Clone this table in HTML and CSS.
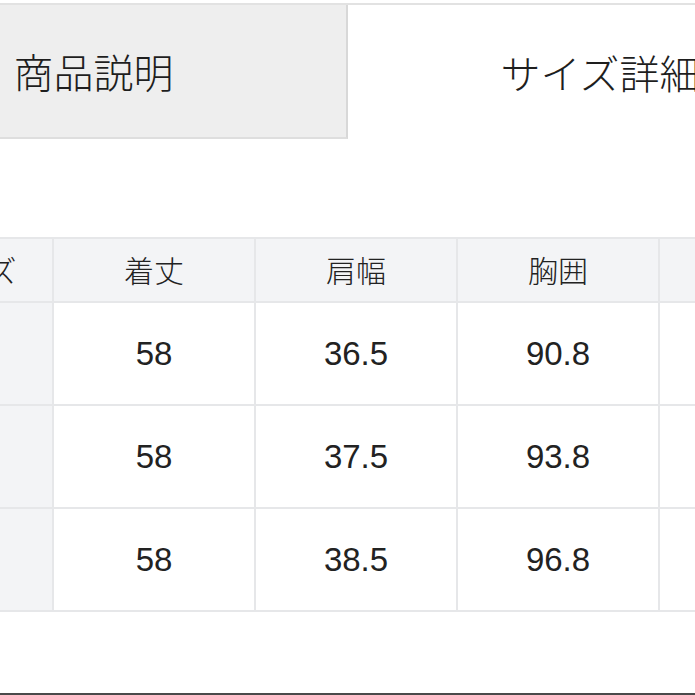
FILE: index.html
```html
<!DOCTYPE html>
<html lang="ja">
<head>
<meta charset="utf-8">
<link rel="stylesheet" href="styles.css">
</head>
<body>
<div class="page">
  <div class="tabs">
    <div class="tab tab-inactive">商品説明</div>
    <div class="tab tab-active">サイズ詳細</div>
  </div>
  <table class="size-table">
    <colgroup>
      <col class="col-first">
      <col class="col-data">
      <col class="col-data">
      <col class="col-data">
      <col class="col-data">
    </colgroup>
    <tr class="head">
      <td class="first">サイズ</td>
      <td>着丈</td>
      <td>肩幅</td>
      <td>胸囲</td>
      <td>袖丈</td>
    </tr>
    <tr>
      <td class="first">S</td>
      <td>58</td>
      <td>36.5</td>
      <td>90.8</td>
      <td>58</td>
    </tr>
    <tr>
      <td class="first">M</td>
      <td>58</td>
      <td>37.5</td>
      <td>93.8</td>
      <td>59</td>
    </tr>
    <tr>
      <td class="first">L</td>
      <td>58</td>
      <td>38.5</td>
      <td>96.8</td>
      <td>60</td>
    </tr>
  </table>
  <div class="footer-line"></div>
</div>
</body>
</html>
```

FILE: styles.css
```css
html, body {
  margin: 0;
  padding: 0;
  background: #ffffff;
  overflow: hidden;
}

body {
  width: 695px;
  height: 695px;
  font-family: "Noto Sans CJK JP", "Liberation Sans", sans-serif;
  color: #222222;
}

.page {
  padding-top: 3px;
  width: 695px;
  overflow: hidden;
}

.tabs {
  display: flex;
  margin-left: -159px;
  width: 1100px;
  border-top: 2px solid #e2e2e2;
}

.tab {
  box-sizing: border-box;
  height: 134px;
  display: flex;
  align-items: center;
  justify-content: center;
  font-size: 40px;
  font-weight: 300;
  color: #1e1e1e;
  line-height: 1;
  flex: none;
}

.tab-inactive {
  width: 507px;
  background: #eeeeee;
  border-right: 2px solid #d8d8d8;
  border-bottom: 2px solid #dedede;
}

.tab-active {
  width: 504px;
  background: #ffffff;
}

.size-table {
  margin-top: 98px;
  margin-left: -108px;
  width: 970px;
  border-collapse: separate;
  border-spacing: 0;
  table-layout: fixed;
}

.col-first {
  width: 162px;
}

.col-data {
  width: 202px;
}

.size-table td {
  height: 101px;
  padding: 0;
  text-align: center;
  vertical-align: middle;
  border-right: 2px solid #e6e7e9;
  border-bottom: 2px solid #e6e7e9;
  background: #ffffff;
  font-family: "Liberation Sans", sans-serif;
  font-size: 33px;
  color: #222222;
  white-space: nowrap;
}

.size-table td.first {
  background: #f3f4f6;
}

.size-table .head td {
  height: 62px;
  border-top: 2px solid #e6e7e9;
  background: #f3f4f6;
  font-family: "Noto Sans CJK JP", sans-serif;
  font-weight: 300;
  font-size: 30px;
  line-height: 1;
  padding-bottom: 3px;
  height: 59px;
}

.footer-line {
  margin-top: 81px;
  border-top: 2px solid #4a4a4a;
  width: 695px;
}
```
